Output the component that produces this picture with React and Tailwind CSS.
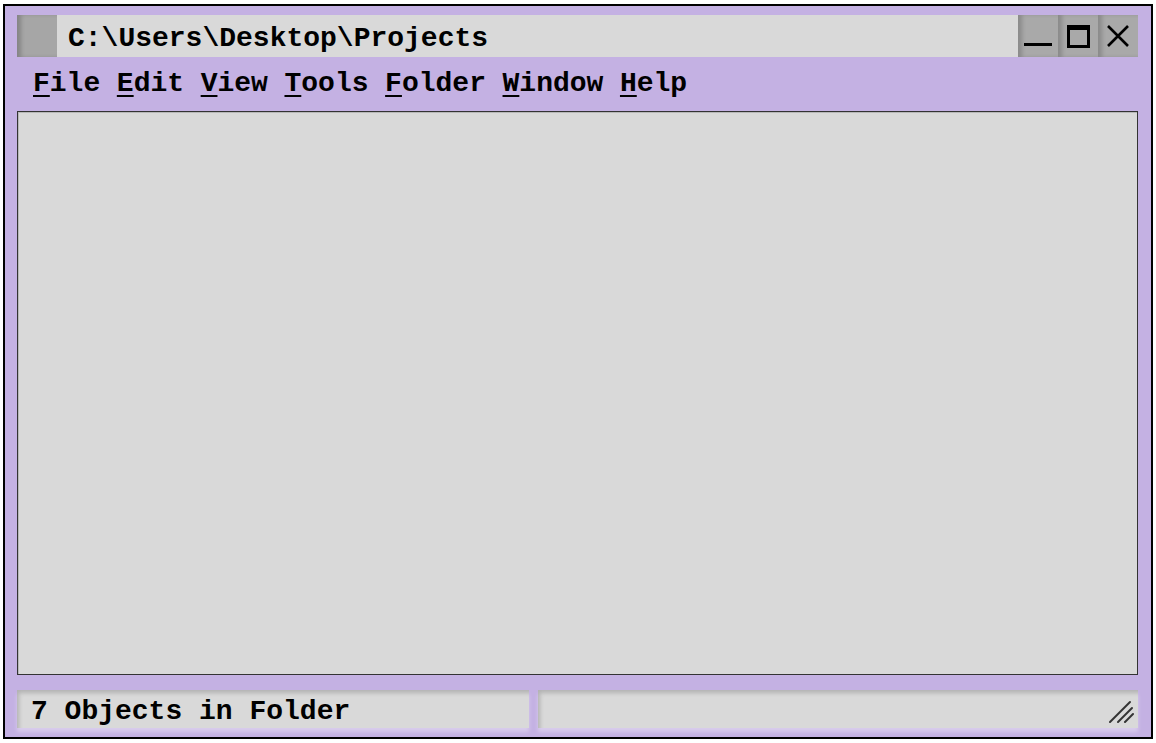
import React from 'react';

const mono = { fontFamily: '"Liberation Mono", "Courier New", monospace' };

const menus = ['File', 'Edit', 'View', 'Tools', 'Folder', 'Window', 'Help'];

// Title bar button with a shaded left edge
const TitleButton = ({ children }) => (
    <div className="w-[40px] h-full flex items-center justify-center bg-[#a9a9a9] shadow-[inset_5px_0_4px_-1px_rgba(0,0,0,0.18)]">
        {children}
    </div>
);

const App = () => {
    return (
        <div className="w-[1156px] h-[743px] bg-white pt-[4px] pl-[3px]" style={mono}>
            <div className="w-[1150px] h-[735px] border-2 border-black bg-[#c4b1e3] pt-[9px] pl-[12px] pr-[12px] flex flex-col">

                {/* Title bar */}
                <div className="h-[42px] w-[1121px] flex bg-[#d9d9d9]">
                    <div className="w-[40px] h-full bg-[#a6a6a6] shadow-[inset_5px_0_4px_-1px_rgba(0,0,0,0.2)]" />
                    <div className="flex-1 flex items-center pl-[11px] pt-[5px] text-[28px] font-bold text-black leading-none">
                        C:\Users\Desktop\Projects
                    </div>
                    <div className="flex h-full">
                        <TitleButton>
                            <div className="w-[28px] h-[3px] bg-black mt-[16px]" />
                        </TitleButton>
                        <TitleButton>
                            <div className="w-[23px] h-[23px] border-[3px] border-t-[5px] border-black" />
                        </TitleButton>
                        <TitleButton>
                            <svg width="24" height="24" viewBox="0 0 24 24">
                                <path d="M2 2 L22 22 M22 2 L2 22" stroke="black" strokeWidth="2.6" />
                            </svg>
                        </TitleButton>
                    </div>
                </div>

                {/* Menu bar */}
                <div className="h-[54px] flex items-center pl-[16px] gap-[16.6px] text-[28px] font-bold text-black leading-none">
                    {menus.map((m) => (
                        <span key={m}>
                            <span className="underline underline-offset-[4px] decoration-2">{m[0]}</span>
                            {m.slice(1)}
                        </span>
                    ))}
                </div>

                {/* Main content area */}
                <div className="w-[1121px] h-[564px] bg-[#d9d9d9] border border-[#333] shadow-[inset_1px_1px_0_rgba(0,0,0,0.15)]" />

                {/* Status bar */}
                <div className="mt-[15px] h-[38px] flex gap-[9px] w-[1121px]">
                    <div className="w-[512px] h-full bg-[#d9d9d9] flex items-center pl-[14px] pt-[5px] text-[28px] font-bold leading-none shadow-[inset_3px_4px_4px_-1px_rgba(0,0,0,0.18),0_4px_4px_rgba(255,255,255,0.35)]">
                        7 Objects in Folder
                    </div>
                    <div className="flex-1 h-full bg-[#d9d9d9] flex items-end justify-end pr-[4px] pb-[4px] shadow-[inset_3px_4px_4px_-1px_rgba(0,0,0,0.18),0_4px_4px_rgba(255,255,255,0.35)]">
                        <svg width="26" height="26" viewBox="0 0 26 26">
                            <g stroke="#333" strokeWidth="2" strokeLinecap="round">
                                <path d="M2 24 L22 4" />
                                <path d="M10 24 L24 10" />
                                <path d="M17 24 L25 16" />
                            </g>
                        </svg>
                    </div>
                </div>
            </div>
        </div>
    );
};

export default App;
